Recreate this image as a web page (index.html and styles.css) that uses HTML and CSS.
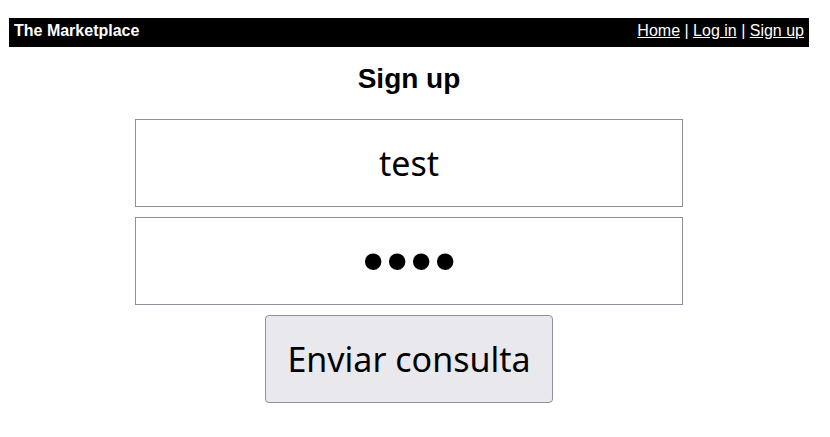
FILE: index.html
```html
<!DOCTYPE html>
<html>
<head>
<meta charset="utf-8">
<link rel="stylesheet" href="styles.css">
</head>
<body>
<div class="page">
  <nav class="bar">
    <span class="brand">The Marketplace</span>
    <span class="links"><a href="#">Home</a> | <a href="#">Log in</a> | <a href="#">Sign up</a></span>
  </nav>
  <h2 class="title">Sign up</h2>
  <form class="form">
    <input class="field" type="text" value="test">
    <input class="field secret" type="password" value="test">
    <input class="submit" type="submit" value="Enviar consulta">
  </form>
</div>
</body>
</html>
```
FILE: styles.css
```css
html, body { margin: 0; padding: 0; background: #fff; }
body { font-family: "Liberation Sans", Arial, sans-serif; }
.page { width: 800px; margin: 18px 0 0 9px; }
.bar {
  box-sizing: border-box;
  background: #000;
  color: #fff;
  height: 29px;
  padding: 0 5px 4px;
  display: flex;
  align-items: center;
  justify-content: space-between;
  font-size: 16px;
}
.brand { font-weight: bold; font-size: 16px; }
.links a { color: #fff; }
.title {
  text-align: center;
  font-size: 28px;
  font-weight: bold;
  margin: 14px 0 22px;
  line-height: 36px;
}
.form {
  display: flex;
  flex-direction: column;
  align-items: center;
  gap: 10px;
}
.field {
  box-sizing: border-box;
  width: 548px;
  height: 88px;
  font-family: "Noto Sans", sans-serif;
  font-size: 34px;
  text-align: center;
  border: 1px solid #8f8f9d;
  border-radius: 0;
  padding: 0;
}
.secret { font-family: "Liberation Sans", sans-serif; font-size: 61px; line-height: 1; letter-spacing: 2.6px; padding-left: 3px; }
.submit {
  box-sizing: border-box;
  width: 288px;
  height: 88px;
  font-family: "Noto Sans", sans-serif;
  font-size: 34px;
  background: #e9e9ed;
  border: 1px solid #8f8f9d;
  border-radius: 4px;
  color: #000;
}
```
